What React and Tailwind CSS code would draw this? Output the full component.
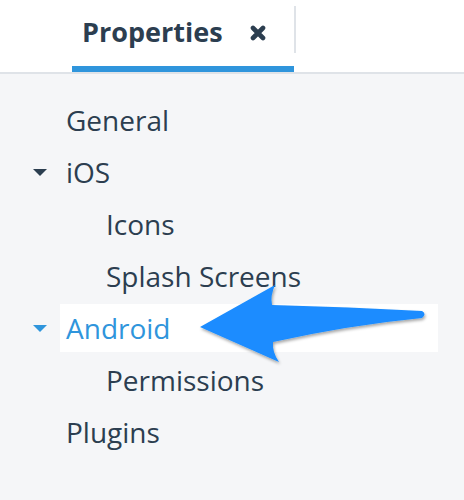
const items = [
    { label: 'General', level: 0 },
    { label: 'iOS', level: 0, caret: true },
    { label: 'Icons', level: 1 },
    { label: 'Splash Screens', level: 1 },
    { label: 'Android', level: 0, caret: true, active: true },
    { label: 'Permissions', level: 1 },
    { label: 'Plugins', level: 0 },
];

function Caret({ color }) {
    return (
        <svg width="16" height="10" viewBox="0 0 16 10" className="shrink-0">
            <path d="M1 2 L15 2 L8 9 Z" fill={color} />
        </svg>
    );
}

function CloseIcon() {
    return (
        <svg width="16" height="16" viewBox="0 0 16 16" className="shrink-0">
            <path
                d="M3 3 L13 13 M13 3 L3 13"
                stroke="#2c3e50"
                strokeWidth="4.6"
                strokeLinecap="round"
            />
        </svg>
    );
}

function Arrow() {
    return (
        <svg
            className="absolute left-0 top-0 pointer-events-none"
            width="464"
            height="500"
            viewBox="0 0 464 500"
        >
            <defs>
                <filter id="shadow" x="-10%" y="-20%" width="120%" height="140%">
                    <feDropShadow dx="1" dy="2" stdDeviation="1.5" floodColor="#000" floodOpacity="0.35" />
                </filter>
            </defs>
            <path
                d="M200 327 L275 285 Q270 296 272 305 Q350 307 422 311 Q427 314 422 318 Q350 325 273 342 Q272 352 279 362 Z"
                fill="#1a8cff"
                filter="url(#shadow)"
            />
        </svg>
    );
}

export default function App() {
    return (
        <div
            className="relative w-[464px] h-[500px] bg-[#f5f6f8] overflow-hidden text-[#2c3e50]"
            style={{ fontFamily: '"Open Sans", sans-serif' }}
        >
            <header className="h-[74px] bg-white border-b-2 border-[#dfe3e8] flex items-start">
                <div className="ml-[72px] w-[222px] h-[72px] border-b-[6px] border-[#2f95dc] flex items-start pt-[14px] pl-[10px]">
                    <span className="text-[27px] font-bold leading-[36px]">Properties</span>
                    <div className="ml-[27px] mt-[11px]">
                        <CloseIcon />
                    </div>
                </div>
                <div className="mt-[6px] w-[2px] h-[47px] bg-[#dfe3e8]" />
            </header>
            <nav className="pt-[20px]">
                {items.map((it) => (
                    <div key={it.label} className="h-[52px] flex items-center">
                        <div className="w-[60px] flex items-center pl-[32px]">
                            {it.caret && <Caret color={it.active ? '#2f95dc' : '#2c3e50'} />}
                        </div>
                        <div
                            className={
                                it.active
                                    ? 'w-[378px] h-[48px] bg-white flex items-center pl-[6px] text-[#2f95dc]'
                                    : 'h-[48px] flex items-center pl-[6px]'
                            }
                        >
                            <span className={`text-[28px] leading-none ${it.level ? 'ml-[40px]' : ''}`}>
                                {it.label}
                            </span>
                        </div>
                    </div>
                ))}
            </nav>
            <Arrow />
        </div>
    );
}
